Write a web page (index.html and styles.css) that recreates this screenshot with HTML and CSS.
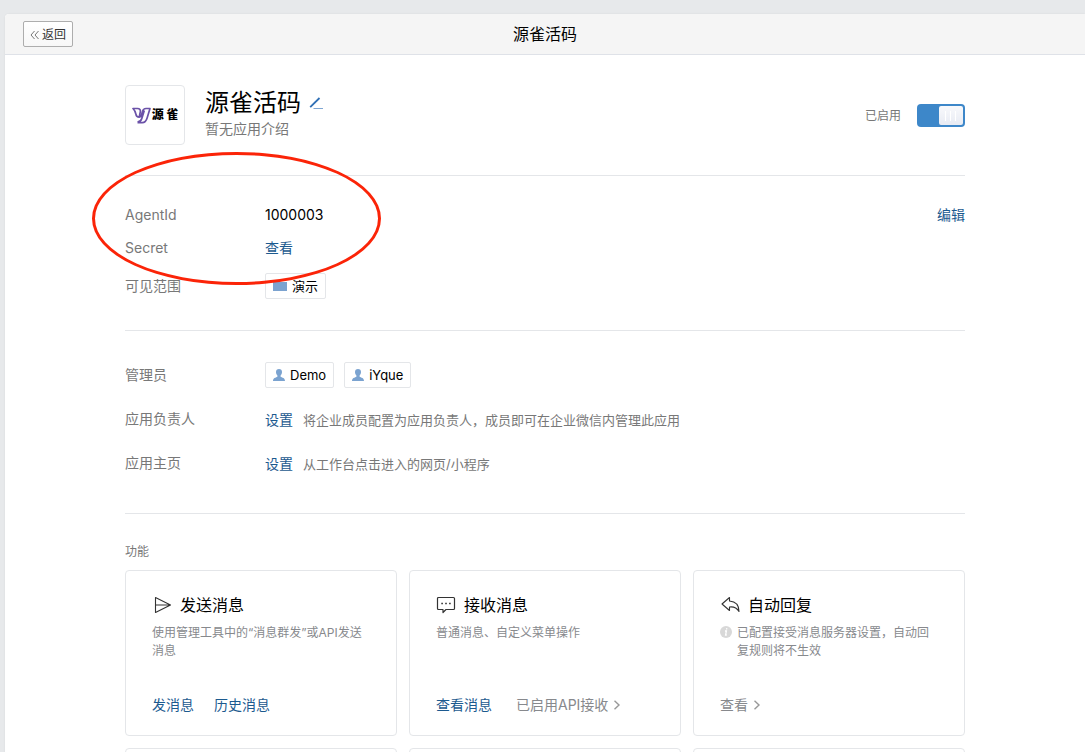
FILE: index.html
```html
<!DOCTYPE html>
<html lang="zh-CN">
<head>
<meta charset="utf-8">
<title>源雀活码</title>
<link rel="stylesheet" href="styles.css">
</head>
<body>
<div class="panel">
  <header class="topbar">
    <button class="back" type="button">
      <svg width="9" height="10" viewBox="0 0 9 10" fill="none" stroke="#777" stroke-width="1"><path d="M4.500 1 1 5l3.500 4M8.500 1 5 5l3.500 4"/></svg>
      <span>返回</span>
    </button>
    <h1 class="topbar-title">源雀活码</h1>
  </header>
  <main class="content">
    <section class="profile">
      <div class="logo">
        <svg width="19" height="17" viewBox="0 0 19 17" fill="none" stroke="#6b52a8" stroke-width="1.700" stroke-linejoin="round"><path d="M7.200 10.200c-2 0-3-1-3.300-3C3.500 4.700 2.500 3 1 1.500h4.500c2.300 0 3.200 1.500 2.800 3.500L7.200 10.200c1.300-.2 2-1 2.300-2.200l1-3.500c.5-2 1.700-3 3.500-3h4l-2.800 9.300c-1 3.400-2.200 4.900-5 4.900H5.500M5.500 15.200c2.500-.4 3.700-1.700 4.300-3.700L12.300 3.500"/></svg>
        <span class="logo-text">源 雀</span>
      </div>
      <div class="profile-text">
        <div class="name-row">
          <h2 class="name">源雀活码</h2>
          <button class="edit-name" type="button" aria-label="修改名称"><svg width="14" height="14" viewBox="0 0 14 14" fill="none"><path d="M1.200 11.200 10.500 2" stroke="#2f6fb5" stroke-width="1.800"/><path d="M4.500 12.500H14" stroke="#7fa6d3"/></svg></button>
        </div>
        <p class="intro">暂无应用介绍</p>
      </div>
      <label class="status"><span>已启用</span><input class="switch" type="checkbox" role="switch" checked></label>
    </section>

    <section class="details">
      <div class="rows">
        <div class="row"><span class="label">AgentId</span><span>1000003</span><a class="link row-end" href="#">编辑</a></div>
        <div class="row"><span class="label">Secret</span><a class="link" href="#">查看</a></div>
        <div class="row row-scope"><span class="label">可见范围</span><span class="chip"><svg width="14" height="10" viewBox="0 0 14 10"><path d="M0 0h5l1 1h8v9H0z" fill="#7ba3d0"/></svg>演示</span></div>
      </div>
      <div class="highlight"></div>
    </section>

    <section class="settings">
      <div class="setting"><span class="label">管理员</span>
        <div class="chips">
          <span class="chip"><svg width="12" height="12" viewBox="0 0 12 12" fill="#7ba3d0"><path d="M6 0c2 0 3 1.300 3 3 0 1.600-.6 2.600-1.400 3.500v1.200c1.800.9 4.400 1.300 4.400 4.300H0c0-3 2.600-3.400 4.400-4.300V6.500C3.600 5.600 3 4.600 3 3c0-1.700 1-3 3-3z"/></svg>Demo</span>
          <span class="chip"><svg width="12" height="12" viewBox="0 0 12 12" fill="#7ba3d0"><path d="M6 0c2 0 3 1.300 3 3 0 1.600-.6 2.600-1.400 3.500v1.200c1.800.9 4.400 1.300 4.400 4.300H0c0-3 2.600-3.400 4.400-4.300V6.500C3.600 5.600 3 4.600 3 3c0-1.700 1-3 3-3z"/></svg>iYque</span>
        </div>
      </div>
      <div class="setting"><span class="label">应用负责人</span><div class="value"><a class="link" href="#">设置</a><span class="hint">将企业成员配置为应用负责人，成员即可在企业微信内管理此应用</span></div></div>
      <div class="setting"><span class="label">应用主页</span><div class="value"><a class="link" href="#">设置</a><span class="hint">从工作台点击进入的网页/小程序</span></div></div>
    </section>

    <section class="features">
      <h3 class="features-title">功能</h3>
      <div class="cards">
        <article class="card">
          <h4 class="card-title"><svg width="20" height="18" viewBox="0 0 20 18" fill="none" stroke="#333" stroke-width="1.100" stroke-linejoin="round"><path d="M3.500 1.500 18.500 9 3.500 16.500zM3.500 9H18"/></svg>发送消息</h4>
          <p class="card-desc">使用管理工具中的“消息群发”或API发送消息</p>
          <div class="card-foot"><a class="link" href="#">发消息</a><a class="link" href="#">历史消息</a></div>
        </article>
        <article class="card">
          <h4 class="card-title"><svg width="20" height="18" viewBox="0 0 20 18" fill="none" stroke="#333" stroke-width="1.200" stroke-linejoin="round"><path d="M2.500 1.500h15a1 1 0 0 1 1 1v10a1 1 0 0 1-1 1H10L7 16.500v-3H2.500a1 1 0 0 1-1-1v-10a1 1 0 0 1 1-1z"/><path d="M5.300 7.500h1.600M9.200 7.500h1.600M13.100 7.500h1.600" stroke-width="1.600"/></svg>接收消息</h4>
          <p class="card-desc">普通消息、自定义菜单操作</p>
          <div class="card-foot card-foot-wide"><a class="link" href="#">查看消息</a><a class="more" href="#">已启用API接收<svg width="8" height="10" viewBox="0 0 8 10" fill="none" stroke="#999" stroke-width="1.400"><path d="m1.500.7 4.500 4.300-4.500 4.300"/></svg></a></div>
        </article>
        <article class="card">
          <h4 class="card-title"><svg width="20" height="18" viewBox="0 0 20 18" fill="none" stroke="#333" stroke-width="1.100" stroke-linejoin="round"><path d="M9.500 1.500 2 8l7.500 6.500V11c4.500-.6 7.300.8 9.500 4.500C19 9 15.500 5.500 9.500 5z"/></svg>自动回复</h4>
          <p class="card-desc card-note"><svg width="12" height="12" viewBox="0 0 12 12"><circle cx="6" cy="6" r="6" fill="#d8d8d8"/><path d="M6.800 2.200 6.600 3.500M5 5h1.400l-.8 4h1.200" fill="none" stroke="#fff" stroke-width="1.300"/></svg><span>已配置接受消息服务器设置，自动回复规则将不生效</span></p>
          <div class="card-foot"><a class="more" href="#">查看<svg width="8" height="10" viewBox="0 0 8 10" fill="none" stroke="#999" stroke-width="1.400"><path d="m1.500.7 4.500 4.300-4.500 4.300"/></svg></a></div>
        </article>
        <article class="card"></article>
        <article class="card"></article>
        <article class="card"></article>
      </div>
    </section>
  </main>
</div>
</body>
</html>
```

FILE: styles.css
```css
* {
  box-sizing: border-box;
}

body {
  margin: 0;
  height: 100vh;
  overflow: hidden;
  padding: 14px 0 0 5px;
  background: #e7e9eb;
  color: #000;
  font: 14px/22px Inter, "Noto Sans CJK SC", sans-serif;
}

h1, h2, h3, h4, p {
  margin: 0;
  font-weight: 400;
}

svg {
  display: block;
  flex: none;
}

button {
  font: inherit;
  cursor: pointer;
}

.link {
  color: #1c5a8f;
  text-decoration: none;
}

.panel {
  min-height: 100%;
  background: #fff;
  border-radius: 4px 0 0 0;
  box-shadow: 0 0 2px rgba(0, 0, 0, 0.08);
}

.topbar {
  display: grid;
  grid-template-columns: 1fr auto 1fr;
  align-items: center;
  padding: 7px 18px;
  background: #f5f5f5;
  border-bottom: 1px solid #dfe2e8;
  border-radius: 4px 0 0 0;
}

.back {
  justify-self: start;
  display: flex;
  align-items: center;
  gap: 3px;
  height: 26px;
  padding: 1px 6px 0;
  border: 1px solid #adadad;
  border-radius: 2px;
  background: linear-gradient(#fff, #f7f7f7);
  color: #333;
  font-size: 12px;
}

.topbar-title {
  font-size: 16px;
}

.content {
  padding: 30px 120px;
}

.profile {
  display: flex;
  align-items: flex-start;
  padding-bottom: 30px;
  border-bottom: 1px solid #e4e6e9;
}

.logo {
  display: flex;
  align-items: center;
  justify-content: center;
  gap: 1px;
  width: 60px;
  height: 60px;
  border: 1px solid #e4e6e9;
  border-radius: 4px;
}

.logo-text {
  font-size: 12px;
  font-weight: 900;
}

.profile-text {
  padding: 2px 0 0 20px;
}

.name-row {
  display: flex;
  align-items: center;
  gap: 8px;
}

.name {
  font-size: 24px;
  line-height: 32px;
}

.edit-name {
  padding: 0;
  border: 0;
  background: none;
}

.intro {
  color: #787878;
  line-height: 20px;
}

.status {
  display: flex;
  align-items: center;
  align-self: center;
  gap: 16px;
  margin-left: auto;
  color: #787878;
  font-size: 12px;
  line-height: 24px;
}

.status span {
  padding-top: 2px;
}

.switch {
  appearance: none;
  display: flex;
  align-items: center;
  justify-content: flex-end;
  width: 48px;
  height: 23px;
  margin: 0;
  padding: 2px;
  border-radius: 4px;
  background: #3d87c9;
}

.switch::before {
  content: "";
  width: 24px;
  height: 19px;
  border-radius: 2px;
  background:
    linear-gradient(#fff, #fff) 6px 5px / 1px 10px no-repeat,
    linear-gradient(#fff, #fff) 11px 5px / 1px 10px no-repeat,
    linear-gradient(#fff, #fff) 16px 5px / 1px 10px no-repeat,
    linear-gradient(#f8f9fc, #e8ebf3);
}

.details {
  position: relative;
  padding: 28px 0 31px;
  border-bottom: 1px solid #e4e6e9;
}

.rows {
  display: flex;
  flex-direction: column;
  gap: 11px;
}

.row {
  display: flex;
  align-items: center;
}

.row-scope {
  margin-top: 3px;
}

.row-end {
  margin-left: auto;
}

.label {
  flex: none;
  width: 140px;
  color: #787878;
}

.chip {
  display: flex;
  align-items: center;
  gap: 5px;
  height: 26px;
  padding: 0 7px;
  border: 1px solid #e4e6e9;
  border-radius: 2px;
  font-size: 13px;
}

.highlight {
  position: absolute;
  left: -33px;
  top: -24px;
  width: 289px;
  height: 133px;
  border: 3px solid #fb2408;
  border-radius: 50%;
  pointer-events: none;
}

.settings {
  display: flex;
  flex-direction: column;
  gap: 14px;
  padding: 31px 0 33px;
  border-bottom: 1px solid #e4e6e9;
}

.setting {
  display: flex;
  align-items: flex-start;
  min-height: 30px;
}

.setting .label {
  line-height: 26px;
}

.chips {
  display: flex;
  gap: 10px;
}

.value {
  display: flex;
  gap: 10px;
  line-height: 28px;
}

.hint {
  color: #787878;
  font-size: 13px;
}

.features {
  padding-top: 28px;
}

.features-title {
  margin-bottom: 8px;
  color: #787878;
  font-size: 12px;
  line-height: 20px;
}

.cards {
  display: grid;
  grid-template-columns: repeat(3, 1fr);
  gap: 12px;
}

.card {
  display: flex;
  flex-direction: column;
  min-height: 166px;
  padding: 22px 26px 19px;
  border: 1px solid #e4e6e9;
  border-radius: 4px;
}

.card-title {
  display: flex;
  align-items: center;
  gap: 8px;
  font-size: 16px;
  line-height: 24px;
}

.card-desc {
  margin-top: 7px;
  color: #87898d;
  font-size: 12px;
  line-height: 18px;
}

.card-note {
  display: flex;
  gap: 5px;
  padding-right: 4px;
}

.card-note svg {
  margin-top: 2px;
}

.card-foot {
  display: flex;
  gap: 20px;
  margin-top: auto;
}

.card-foot-wide {
  gap: 24px;
}

.more {
  display: flex;
  align-items: center;
  gap: 5px;
  color: #87898d;
  text-decoration: none;
}
```
